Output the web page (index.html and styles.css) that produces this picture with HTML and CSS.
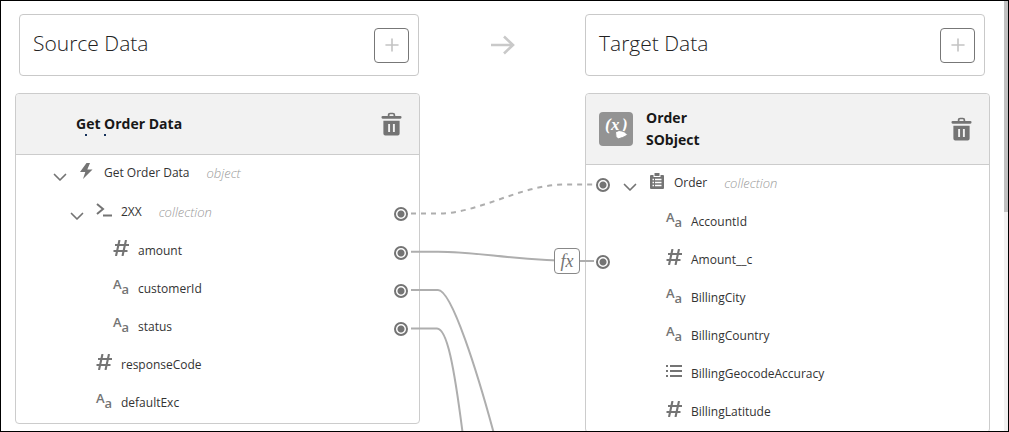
FILE: index.html
```html
<!DOCTYPE html>
<html lang="en">
<head>
  <meta charset="UTF-8">
  <title>Data Mapper</title>
  <meta name="viewport" content="width=device-width, initial-scale=1.0">
  <link rel="stylesheet" href="styles.css">
</head>
<body>
  <!-- Icon set -->
  <svg class="sprite" aria-hidden="true">
    <symbol id="plus" viewBox="0 0 14 14"><path d="M7 1v12M1 7h12" fill="none" stroke="currentColor" stroke-width="1.6" stroke-linecap="round"/></symbol>
    <symbol id="trash" viewBox="0 0 22 24">
      <path d="M8 4V2.600Q8 1 9.600 1h2.800Q14 1 14 2.600V4" fill="none" stroke="currentColor" stroke-width="1.8"/>
      <rect x="0.500" y="3.700" width="21" height="2.800" rx="1.200" fill="currentColor"/>
      <path fill="currentColor" fill-rule="evenodd" d="M2.500 8.500h17V22q0 2-2 2h-13q-2 0-2-2zM7.500 12v8.500h2V12zm5 0v8.500h2V12z"/>
    </symbol>
    <symbol id="chevron" viewBox="0 0 14 14"><path d="M1.500 4.500L7 10l5.500-5.500" fill="none" stroke="currentColor" stroke-width="1.700" stroke-linecap="round" stroke-linejoin="round"/></symbol>
    <symbol id="bolt" viewBox="0 0 16 16"><path fill="currentColor" d="M7.500 0L1 9h5.300L4 16l9.500-9.500H8.300L11 0z"/></symbol>
    <symbol id="prompt" viewBox="0 0 16 16"><path d="M1 2l6 5-6 5M7 13.500h9" fill="none" stroke="currentColor" stroke-width="2"/></symbol>
    <symbol id="hash" viewBox="0 0 16 16"><path d="M6.500 0L3 16M13 0L9.500 16M2 5h14M0.500 11h14" fill="none" stroke="currentColor" stroke-width="2.100"/></symbol>
    <symbol id="list" viewBox="0 0 16 16"><path d="M0 3h2M4 3h12M0 8h2M4 8h12M0 13h2M4 13h12" fill="none" stroke="currentColor" stroke-width="2.100"/></symbol>
    <symbol id="clipboard" viewBox="0 0 16 16">
      <path fill="currentColor" d="M2 2h2.500v2h7V2H14q1 0 1 1v12q0 1-1 1H2q-1 0-1-1V3q0-1 1-1z"/>
      <path fill="currentColor" d="M5.500 0h5v3h-5z"/>
      <path d="M3.500 6.500h1.500M6 6.500h6.500M3.500 9.500h1.500M6 9.500h6.500M3.500 12.500h1.500M6 12.500h6.500" stroke="#fff" stroke-width="1.300"/>
    </symbol>
  </svg>

  <main class="mapper">
    <section class="column source">
      <div class="title-bar">
        <h2>Source Data</h2>
        <button class="add" aria-label="Add source"><svg><use href="#plus"/></svg></button>
      </div>

      <div class="card">
        <header class="card-header">
          <span class="tile-slot"></span>
          <h3>Get Order Data</h3>
          <svg class="marks" viewBox="0 0 30 2" aria-hidden="true"><path d="M9 1h2M28 1h2" stroke="#16325c" stroke-width="2"/></svg>
          <button class="delete" aria-label="Delete source"><svg><use href="#trash"/></svg></button>
        </header>
        <ul class="tree">
          <li class="row group">
            <button class="toggle" aria-label="Collapse"><svg><use href="#chevron"/></svg></button>
            <svg class="icon"><use href="#bolt"/></svg>
            <span>Get Order Data</span>
            <em>object</em>
          </li>
          <li class="row group level-2">
            <button class="toggle" aria-label="Collapse"><svg><use href="#chevron"/></svg></button>
            <svg class="icon"><use href="#prompt"/></svg>
            <span>2XX</span>
            <em>collection</em>
            <i class="port"></i>
          </li>
          <li class="row level-3"><svg class="icon"><use href="#hash"/></svg><span>amount</span><i class="port"></i></li>
          <li class="row level-3"><b class="icon text-icon">A<small>a</small></b><span>customerId</span><i class="port"></i></li>
          <li class="row level-3"><b class="icon text-icon">A<small>a</small></b><span>status</span><i class="port"></i></li>
          <li class="row level-2"><svg class="icon"><use href="#hash"/></svg><span>responseCode</span></li>
          <li class="row level-2"><b class="icon text-icon">A<small>a</small></b><span>defaultExc</span></li>
        </ul>
      </div>
    </section>

    <div class="gutter">
      <svg class="arrow" viewBox="0 0 24 20"><path d="M0 10h22M13 1.500l9 8.500-9 8.500" fill="none" stroke="currentColor" stroke-width="2.600"/></svg>
      <svg class="links" viewBox="410 1 185 431">
        <path class="dashed" d="M411 213.500H438C480 213.500 520 184.500 565 184.500H594"/>
        <path d="M411 251.700H438C480 251.700 515 261 580 261H594"/>
        <path d="M411 290H438C452 290 478 375 493.500 432"/>
        <path d="M411 328.500H437C447 328.500 454 366 462.500 432"/>
      </svg>
      <button class="fx">fx</button>
    </div>

    <section class="column target">
      <div class="title-bar">
        <h2>Target Data</h2>
        <button class="add" aria-label="Add target"><svg><use href="#plus"/></svg></button>
      </div>

      <div class="card">
        <header class="card-header tall">
          <svg class="tile" viewBox="0 0 34 34">
            <text x="6 12 23" y="18">(x)</text>
            <path fill="#fff" stroke="#939393" d="M16.500 20l3.500-1.500 3 .5 2.500 1 3 2.500-2.500 2-2.500 1-4.500 1.500-2-2.500z"/>
          </svg>
          <h3>Order<br>SObject</h3>
          <button class="delete" aria-label="Delete target"><svg><use href="#trash"/></svg></button>
        </header>
        <ul class="tree">
          <li class="row group">
            <i class="port"></i>
            <button class="toggle" aria-label="Collapse"><svg><use href="#chevron"/></svg></button>
            <svg class="icon"><use href="#clipboard"/></svg>
            <span>Order</span>
            <em>collection</em>
          </li>
          <li class="row level-2"><b class="icon text-icon">A<small>a</small></b><span>AccountId</span></li>
          <li class="row level-2"><i class="port"></i><svg class="icon"><use href="#hash"/></svg><span>Amount__c</span></li>
          <li class="row level-2"><b class="icon text-icon">A<small>a</small></b><span>BillingCity</span></li>
          <li class="row level-2"><b class="icon text-icon">A<small>a</small></b><span>BillingCountry</span></li>
          <li class="row level-2"><svg class="icon"><use href="#list"/></svg><span>BillingGeocodeAccuracy</span></li>
          <li class="row level-2"><svg class="icon"><use href="#hash"/></svg><span>BillingLatitude</span></li>
        </ul>
      </div>
    </section>

    <div class="scrollbar"></div>
  </main>
</body>
</html>
```
FILE: styles.css
```css
* {
  box-sizing: border-box;
}

body {
  margin: 0;
  background-color: #fff;
  color: #333;
  font-family: "Open Sans", "Noto Sans", sans-serif;
  font-size: 12px;
}

h2,
h3,
ul {
  margin: 0;
  padding: 0;
}

svg {
  display: block;
}

button {
  padding: 0;
  border: none;
  background: none;
  color: #747474;
  cursor: pointer;
}

.sprite {
  display: none;
}

.mapper {
  position: relative;
  display: grid;
  grid-template-columns: 1fr 165px 1fr;
  height: 100vh;
  padding: 0 18px 0 14px;
  border: 1px solid #000;
  overflow: hidden;
}

.column {
  display: flex;
  flex-direction: column;
  gap: 17px;
  padding-top: 13px;
}

/* Title bars */
.title-bar {
  display: flex;
  align-items: center;
  justify-content: space-between;
  height: 62px;
  padding: 0 9px 0 13px;
  border: 1px solid #c9c9c9;
  border-radius: 4px;
}

.source .title-bar {
  margin: 0 1px 0 4px;
}

.target .title-bar {
  margin-right: 5px;
}

.title-bar h2 {
  padding-bottom: 4px;
  color: #222;
  font-size: 21px;
  font-weight: 300;
  line-height: 28px;
}

.add {
  display: grid;
  place-items: center;
  width: 35px;
  height: 35px;
  border: 1px solid #777;
  border-radius: 4px;
  color: #c4c4c4;
}

.add svg {
  width: 14px;
  height: 14px;
}

/* Cards */
.card {
  flex-shrink: 0;
  border: 1px solid #ccc;
  border-radius: 4px;
}

.card-header {
  position: relative;
  display: flex;
  align-items: center;
  gap: 13px;
  height: 61px;
  padding: 0 17px 0 13px;
  border-bottom: 1px solid #ccc;
  border-radius: 4px 4px 0 0;
  background-color: #f2f2f2;
}

.card-header.tall {
  height: 71px;
}

.card-header h3 {
  flex: 1;
  color: #181818;
  font-size: 14px;
  font-weight: 700;
  line-height: 22px;
}

.tile-slot,
.tile {
  width: 34px;
  height: 34px;
}

.tile {
  border-radius: 4px;
  background-color: #939393;
}

.tile text {
  fill: #fff;
  font: italic bold 17px "Liberation Serif", serif;
}

.marks {
  position: absolute;
  left: 60px;
  bottom: 18px;
  width: 30px;
  height: 2px;
}

.delete svg {
  width: 21px;
  height: 24px;
}

/* Tree rows */
.tree {
  list-style: none;
}

.row {
  position: relative;
  display: flex;
  align-items: center;
  height: 38px;
  padding-bottom: 4px;
  padding-left: 63px;
}

.row.group {
  height: 39px;
  padding-left: 37px;
}

.row.level-2 {
  padding-left: 80px;
}

.row.group.level-2 {
  padding-left: 54px;
}

.row.level-3 {
  padding-left: 97px;
}

.toggle {
  margin: 8px 12px 0 0;
}

.toggle svg {
  width: 14px;
  height: 14px;
}

.icon {
  flex: none;
  width: 16px;
  height: 16px;
  margin: 0 9px 4px 0;
  color: #747474;
}

.text-icon {
  font-size: 13px;
  font-weight: 600;
  line-height: 12px;
}

.text-icon small {
  font-size: 13px;
  position: relative;
  top: 5px;
}

.row em {
  margin-left: 17px;
  color: #999;
  font-size: 13px;
  font-weight: 300;
}

.port {
  position: absolute;
  top: 13px;
  width: 14px;
  height: 14px;
  border: 2px solid #747474;
  border-radius: 50%;
  background: radial-gradient(circle, #747474 3px, #fff 4px);
}

.source .port {
  right: 11px;
}

.target .port {
  left: 10px;
}

/* Links between the two trees */
.gutter {
  position: relative;
  padding-top: 34px;
}

.arrow {
  width: 24px;
  height: 20px;
  margin: 0 auto;
  color: #c9c9c9;
}

.links {
  position: absolute;
  top: 0;
  left: -10px;
  width: 185px;
  height: 431px;
  fill: none;
  stroke: #aeaeae;
  stroke-width: 2;
}

.links .dashed {
  stroke-dasharray: 5 5;
}

.fx {
  position: absolute;
  top: 247px;
  left: 134px;
  width: 26px;
  height: 26px;
  border: 1px solid #888;
  border-radius: 4px;
  background-color: #fff;
  font: italic 18px/20px "Liberation Serif", serif;
}

.scrollbar {
  position: absolute;
  top: 0;
  right: 0;
  width: 4px;
  height: 100%;
  background: linear-gradient(#c1c1c1 49%, #f1f1f1 49%);
}
```
